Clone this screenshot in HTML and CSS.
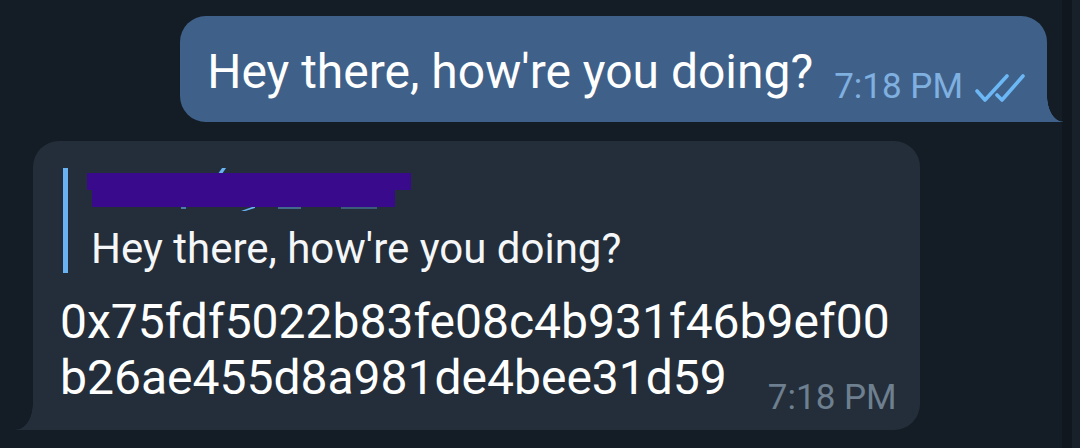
FILE: index.html
```html
<!DOCTYPE html>
<html lang="en">
<head>
<meta charset="utf-8">
<title>Chat</title>
<link rel="stylesheet" href="styles.css">
</head>
<body>
<div class="screen">
  <main class="chat">
    <div class="row row-out">
      <div class="bubble bubble-out">
        <p class="msg">Hey there, how're you doing?<span class="meta meta-out"><span class="time">7:18 PM</span><svg class="ticks" viewBox="0 0 50 28" width="50" height="28"><polyline points="2,17 10,26 32,2"/><polyline points="22,21 27,26 48,2"/></svg></span></p>
      </div>
    </div>
    <div class="row row-in">
      <div class="bubble bubble-in">
        <div class="quote">
          <div class="quote-name">
            <span class="name-bit bit-slash"></span>
            <span class="name-bit bit-tri"></span>
            <span class="name-bit bit-a"></span>
            <span class="name-bit bit-b"></span>
            <span class="name-bit bit-c"></span>
            <span class="redact redact-1"></span>
            <span class="redact redact-2"></span>
          </div>
          <div class="quote-text">Hey there, how're you doing?</div>
        </div>
        <p class="msg hex">0x75fdf5022b83fe08c4b931f46b9ef00<br>b26ae455d8a981de4bee31d59<span class="meta meta-in">7:18 PM</span></p>
      </div>
    </div>
    <div class="spacer"></div>
    <div class="bottom-line"></div>
  </main>
  <aside class="edge">
    <div class="edge-dark"></div>
    <div class="edge-light"></div>
  </aside>
</div>
</body>
</html>
```

FILE: styles.css
```css
* { box-sizing: border-box; }

html, body {
  margin: 0;
  padding: 0;
  width: 1080px;
  height: 448px;
  overflow: hidden;
  background: #141d26;
  font-family: Roboto, "Noto Sans", "Liberation Sans", sans-serif;
}

.screen {
  display: flex;
  width: 1080px;
  height: 448px;
}

.chat {
  flex: 1;
  display: flex;
  flex-direction: column;
  gap: 19px;
  padding-top: 16px;
  background: #141d26;
}

.row { display: flex; }
.row-out { justify-content: flex-end; padding-right: 15px; }
.row-in { justify-content: flex-start; padding-left: 33px; }

.bubble {
  position: relative;
  border-radius: 26px;
  color: #ffffff;
}

.bubble-out {
  background: #3f6189;
  border-bottom-right-radius: 0;
  padding: 28px 22px 15px 27px;
}

.bubble-out::after {
  content: "";
  position: absolute;
  right: -16px;
  bottom: 0;
  width: 16px;
  height: 26px;
  background: radial-gradient(16px 26px at 100% 0, transparent 97%, #3f6189 100%);
}

.bubble-in {
  background: #232e3a;
  border-bottom-left-radius: 0;
  padding: 27px 23px 12px 27px;
}

.bubble-in::after {
  content: "";
  position: absolute;
  left: -17px;
  bottom: 0;
  width: 17px;
  height: 26px;
  background: radial-gradient(17px 26px at 0 0, transparent 97%, #232e3a 100%);
}

.msg {
  margin: 0;
  font-size: 48px;
  line-height: 56px;
  white-space: nowrap;
}

.meta {
  display: inline-block;
  font-size: 35px;
  line-height: 40px;
  vertical-align: -10px;
}

.meta-out {
  margin-left: 21px;
  color: #7fb0e0;
}

.ticks {
  margin-left: 12px;
  vertical-align: -4px;
  fill: none;
  stroke: #6cb7f5;
  stroke-width: 3.6;
  stroke-linecap: round;
  stroke-linejoin: round;
}

.meta-in {
  margin-left: 41px;
  vertical-align: -15px;
  color: #6e7f8f;
}

.quote {
  margin-left: 3px;
  margin-bottom: 21px;
  border-left: 5px solid #6ab3f3;
  padding-left: 23px;
}

.quote-name {
  position: relative;
  height: 57px;
}

.quote-text {
  font-size: 42px;
  line-height: 48px;
  color: #f4f6f8;
  white-space: nowrap;
}

.redact {
  position: absolute;
  background: #390b8c;
}
.redact-1 { left: -4px; top: 5px; width: 324px; height: 17px; }
.redact-2 { left: 1px; top: 21px; width: 303px; height: 18px; }

.name-bit {
  position: absolute;
  background: #6ab3f3;
}
.bit-slash { left: 129px; top: 0; width: 4px; height: 6px; transform: skewX(-35deg); }
.bit-tri { left: 150px; top: 38px; width: 14px; height: 5px; clip-path: polygon(0 100%, 100% 0, 100% 40%, 30% 100%); }
.bit-a { left: 90px; top: 39px; width: 5px; height: 2px; opacity: 0.6; }
.bit-b { left: 187px; top: 39px; width: 23px; height: 2px; opacity: 0.45; }
.bit-c { left: 250px; top: 39px; width: 36px; height: 2px; opacity: 0.35; }

.spacer { flex: 1; }

.bottom-line {
  height: 3px;
  background: #1e2730;
  margin-top: -19px;
}

.edge {
  width: 18px;
  display: flex;
}
.edge-dark { width: 10px; background: #10171e; }
.edge-light { flex: 1; background: #18212a; }
```
